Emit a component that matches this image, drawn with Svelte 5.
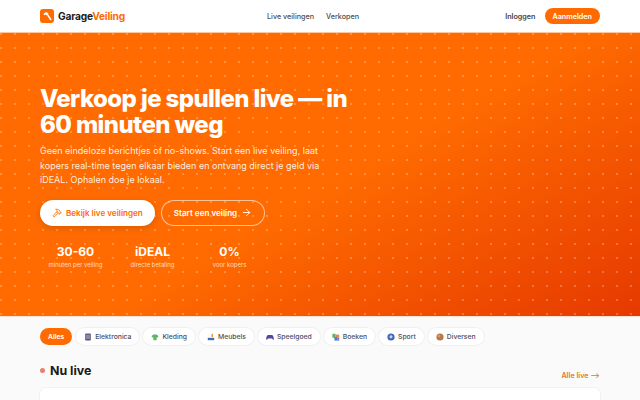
<script>
	const stats = [
		{ value: '30-60', label: 'minuten per veiling' },
		{ value: 'iDEAL', label: 'directe betaling' },
		{ value: '0%', label: 'voor kopers' }
	];
	const cats = ['Elektronica', 'Kleding', 'Meubels', 'Speelgoed', 'Boeken', 'Sport', 'Diversen'];
</script>

<div class="page">
	<header class="nav">
		<a class="logo" href="#top">
			<span class="logo-mark">
				<svg viewBox="0 0 12 12" width="11" height="11"><path d="M1.5 3.2 4.4 1.2 6.4 2.2 7.2 3.4 5.4 5 3.8 3.9 2.6 4.6Z" fill="#fff" /><path d="M5.6 4.8 6.9 3.7 10.6 9.3 9.2 10.4Z" fill="#fff" /></svg>
			</span>
			<span class="logo-text">Garage<em>Veiling</em></span>
		</a>
		<nav class="links">
			<a href="#live">Live veilingen</a>
			<a href="#sell">Verkopen</a>
		</nav>
		<div class="actions">
			<a href="#login">Inloggen</a>
			<button class="signup">Aanmelden</button>
		</div>
	</header>

	<section class="hero">
		<h1>Verkoop je spullen live — in 60 minuten weg</h1>
		<p>Geen eindeloze berichtjes of no-shows. Start een live veiling, laat kopers real-time tegen elkaar bieden en ontvang direct je geld via iDEAL. Ophalen doe je lokaal.</p>
		<div class="cta">
			<button class="primary">
				<svg viewBox="0 0 24 24" width="10" height="10" fill="none" stroke="currentColor" stroke-width="2" stroke-linecap="round" stroke-linejoin="round"><path d="m15 12-8.4 8.4a2 2 0 1 1-3-3L12 9" /><path d="m18 15 4-4" /><path d="m21.5 11.5-1.9-1.9A2 2 0 0 1 19 8.2V7l-2.3-2.3a6 6 0 0 0-4.2-1.7H9l.9.8a6.5 6.5 0 0 1 2.1 4.7V10l2 2h1.2a2 2 0 0 1 1.4.6l1.9 1.9" /></svg>
				Bekijk live veilingen
			</button>
			<button class="secondary">
				Start een veiling
				<svg viewBox="0 0 24 24" width="11" height="11" fill="none" stroke="currentColor" stroke-width="2" stroke-linecap="round" stroke-linejoin="round"><path d="M5 12h14" /><path d="m12 5 7 7-7 7" /></svg>
			</button>
		</div>
		<div class="stats">
			{#each stats as s}
				<div class="stat">
					<strong>{s.value}</strong>
					<span>{s.label}</span>
				</div>
			{/each}
		</div>
	</section>

	<main class="content">
		<div class="cats">
			<button class="chip active">Alles</button>
			{#each cats as c}
				<button class="chip">
					<svg viewBox="0 0 10 10" width="8" height="8">
						{#if c === 'Elektronica'}
							<rect x="1.5" y="0.5" width="7" height="9" rx="1" fill="#5b5478" /><rect x="2.5" y="2" width="5" height="5.5" fill="#8d86a8" />
						{:else if c === 'Kleding'}
							<path d="M3 2h4l2.5 2-1.5 1.5H7V9H3V5.5H2L.5 4Z" fill="#5fb56a" />
						{:else if c === 'Meubels'}
							<rect x="1" y="6" width="8" height="3" fill="#3f6fb5" /><rect x="5.5" y="1" width="2" height="4" fill="#e9a13b" />
						{:else if c === 'Speelgoed'}
							<path d="M2.5 2.5h5C9 2.5 9.8 6 9.8 7.8 9.8 9 8.5 8.8 7.5 7H2.5C1.5 8.8.2 9 .2 7.8.2 6 1 2.5 2.5 2.5Z" fill="#54489e" />
						{:else if c === 'Boeken'}
							<rect x="0.5" y="1" width="4" height="5" fill="#5fb56a" /><rect x="4.5" y="2" width="4.5" height="4" fill="#e2884a" /><rect x="3" y="5" width="3.5" height="4.5" fill="#4c7fd0" /><rect x="6.5" y="6" width="2.5" height="3.5" fill="#8a6fc9" />
						{:else if c === 'Sport'}
							<circle cx="5" cy="5" r="4.5" fill="#4466b8" /><path d="M5 2.5 7 4 6.2 6.5H3.8L3 4Z" fill="#c9d4ef" />
						{:else}
							<circle cx="5" cy="5" r="4.5" fill="#b9794b" /><circle cx="3.8" cy="3.8" r="1.5" fill="#d9a074" />
						{/if}
					</svg>
					{c}
				</button>
			{/each}
		</div>
		<div class="section-head">
			<h2><span class="dot"></span>Nu live</h2>
			<a href="#all">Alle live ⟶</a>
		</div>
		<div class="card"></div>
	</main>
</div>

<style>
	:global(body) {
		background: #fafafa;
		font-family: Inter, 'Liberation Sans', sans-serif;
	}

	.page {
		height: 400px;
		overflow: hidden;
	}

	a {
		text-decoration: none;
		color: inherit;
	}

	button {
		font-family: inherit;
		border: none;
		cursor: pointer;
	}

	.nav {
		height: 33px;
		box-sizing: border-box;
		background: #fff;
		border-bottom: 1px solid #ffc79e;
		display: flex;
		justify-content: space-between;
		align-items: center;
		padding: 0 40px;
	}

	.logo {
		display: flex;
		align-items: center;
		gap: 4px;
	}

	.logo-mark {
		width: 14px;
		height: 14px;
		border-radius: 3px;
		background: #ff6b00;
		display: flex;
		align-items: center;
		justify-content: center;
	}

	.logo-text {
		font-size: 10.2px;
		font-weight: 700;
		color: #1a1a1a;
		letter-spacing: -0.2px;
	}

	.logo-text em {
		font-style: normal;
		color: #ff6b00;
	}

	.links {
		display: flex;
		gap: 12px;
		margin-left: -4px;
		font-size: 7.2px;
		font-weight: 500;
		color: #4b4b4b;
	}

	.actions {
		display: flex;
		align-items: center;
		gap: 9px;
		font-size: 7.2px;
		font-weight: 600;
		color: #444;
	}

	.signup {
		height: 16px;
		padding: 0 8px;
		border-radius: 8px;
		background: #ff6b00;
		color: #fff;
		font-size: 7.2px;
		font-weight: 600;
	}

	.hero {
		height: 283px;
		box-sizing: border-box;
		padding: 53px 40px 0;
		color: #fff;
		background-color: #ff6b00;
		background-image:
			radial-gradient(circle, rgba(255, 255, 255, 0.26) 0.7px, transparent 1px),
			linear-gradient(150deg, #ff6b00 0%, #ff6b00 52%, #e63900 100%);
		background-size: 14px 14px, 100% 100%;
		background-position: 8px -6px, 0 0;
	}

	h1 {
		margin: 0;
		max-width: 320px;
		font-size: 24px;
		line-height: 26px;
		font-weight: 800;
		letter-spacing: -0.6px;
	}

	.hero p {
		margin: 6px 0 0;
		max-width: 300px;
		font-size: 9px;
		line-height: 14.6px;
		color: rgba(255, 255, 255, 0.9);
	}

	.cta {
		display: flex;
		gap: 6px;
		margin-top: 12px;
	}

	.cta button {
		height: 26px;
		border-radius: 13px;
		display: flex;
		align-items: center;
		gap: 4px;
		font-size: 8.1px;
		font-weight: 600;
	}

	.primary {
		background: #fff;
		color: #ff6b00;
		padding: 0 12px;
		box-shadow: 0 2px 6px rgba(0, 0, 0, 0.15);
	}

	.secondary {
		background: transparent;
		color: #fff;
		padding: 0 13px;
		box-shadow: inset 0 0 0 1px rgba(255, 255, 255, 0.6);
	}

	.stats {
		display: grid;
		grid-template-columns: repeat(3, 77px);
		margin: 18px 0 0 -3px;
	}

	.stat {
		display: flex;
		flex-direction: column;
		align-items: center;
		gap: 1px;
	}

	.stat strong {
		font-size: 12px;
		font-weight: 700;
		line-height: 15px;
	}

	.stat span {
		font-size: 6px;
		line-height: 9px;
		color: rgba(255, 255, 255, 0.75);
	}

	.content {
		border-top: 1px solid #ffe3d2;
		padding: 11px 40px 0;
	}

	.cats {
		display: flex;
		gap: 4px;
	}

	.chip {
		height: 17px;
		padding: 0 8px;
		border-radius: 9px;
		background: #fff;
		box-shadow: 0 0 0 1px #f0f0f0;
		display: flex;
		align-items: center;
		gap: 3px;
		font-size: 6.8px;
		font-weight: 500;
		color: #4c4c5c;
	}

	.chip.active {
		background: #ff6b00;
		color: #fff;
		font-weight: 600;
		box-shadow: none;
	}

	.section-head {
		display: flex;
		align-items: flex-end;
		justify-content: space-between;
		margin-top: 18px;
	}

	h2 {
		margin: 0;
		display: flex;
		align-items: center;
		gap: 5px;
		font-size: 12.4px;
		font-weight: 700;
		color: #1a1a1a;
	}

	.dot {
		width: 5px;
		height: 5px;
		border-radius: 50%;
		background: #e8806a;
	}

	.section-head a {
		margin-bottom: -2px;
		font-size: 7.2px;
		font-weight: 600;
		color: #e8762c;
	}

	.card {
		margin-top: 10px;
		height: 60px;
		background: #fff;
		border-radius: 6px;
		box-shadow: 0 0 0 1px #f2f2f2;
	}
</style>
